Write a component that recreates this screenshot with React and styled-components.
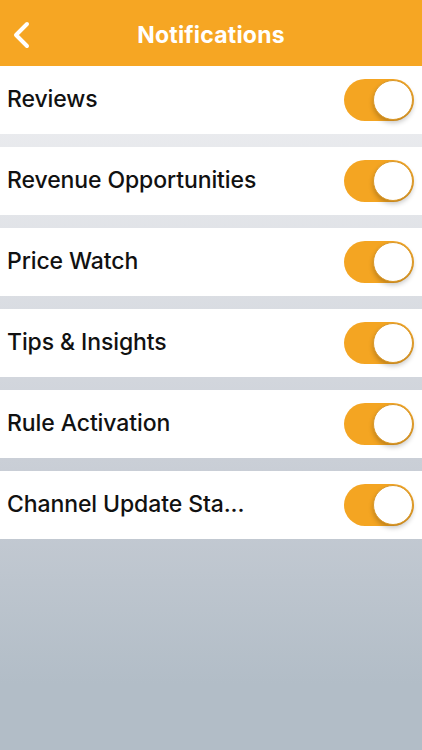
import React, { useState } from 'react';
import styled, { createGlobalStyle } from 'styled-components';

const GlobalStyle = createGlobalStyle`
    html, body {
        margin: 0;
        padding: 0;
    }
    body {
        font-family: Inter, "Liberation Sans", Arial, sans-serif;
        -webkit-font-smoothing: antialiased;
    }
`;

const Screen = styled.div`
    width: 422px;
    min-height: 750px;
    display: flex;
    flex-direction: column;
    background: linear-gradient(180deg, #f3f3f5 0px, #e4e6ea 200px, #c9ced6 470px, #b2bdc7 684px);
`;

const Header = styled.header`
    height: 66px;
    flex-shrink: 0;
    background: #f6a623;
    display: grid;
    grid-template-columns: 60px 1fr 60px;
    align-items: center;
`;

const BackButton = styled.button`
    background: none;
    border: none;
    padding: 4px 0 0 12px;
    height: 66px;
    display: flex;
    align-items: center;
    cursor: pointer;
`;

const Title = styled.h1`
    margin: 0;
    text-align: center;
    color: #fff;
    font-size: 23px;
    font-weight: 700;
    letter-spacing: 0.2px;
    padding-top: 3px;
`;

const List = styled.ul`
    list-style: none;
    margin: 0;
    padding: 0;
    display: flex;
    flex-direction: column;
    gap: 13px;
`;

const Row = styled.li`
    height: 68px;
    background: #fff;
    display: flex;
    align-items: center;
    justify-content: space-between;
    padding: 0 8px 0 7px;
`;

const Label = styled.span`
    font-size: 23px;
    font-weight: 500;
    color: #111;
    letter-spacing: -0.1px;
    white-space: nowrap;
    overflow: hidden;
    text-overflow: ellipsis;
    max-width: 260px;
    padding-bottom: 3px;
`;

const Track = styled.button`
    width: 70px;
    height: 42px;
    border-radius: 21px;
    border: none;
    padding: 0;
    background: ${p => (p.$on ? '#f4a522' : '#e5e5ea')};
    display: flex;
    align-items: center;
    justify-content: ${p => (p.$on ? 'flex-end' : 'flex-start')};
    cursor: pointer;
`;

const Knob = styled.span`
    width: 40px;
    height: 40px;
    box-sizing: border-box;
    border-radius: 50%;
    background: #fff;
    border: 1.5px solid #d9982a;
    box-shadow: 0 3px 5px rgba(0, 0, 0, 0.22);
    margin: 0 1px;
`;

const Toggle = ({ on, onClick }) => (
    <Track $on={on} onClick={onClick}>
        <Knob />
    </Track>
);

const items = [
    'Reviews',
    'Revenue Opportunities',
    'Price Watch',
    'Tips & Insights',
    'Rule Activation',
    'Channel Update Status',
];

const App = () => {
    const [ settings, setSettings ] = useState(items.map(() => true));

    const flip = i => {
        setSettings(settings.map((v, j) => (j === i ? !v : v)));
    };

    return (
        <>
            <GlobalStyle />
            <Screen>
                <Header>
                    <BackButton aria-label="Back">
                        <svg width="22" height="28" viewBox="0 0 22 28">
                            <path d="M15 3 L4 14 L15 25" fill="none" stroke="#fff" strokeWidth="4" strokeLinecap="round" strokeLinejoin="round" />
                        </svg>
                    </BackButton>
                    <Title>Notifications</Title>
                    <div />
                </Header>
                <List>
                    {items.map((name, i) => (
                        <Row key={name}>
                            <Label>{name === 'Channel Update Status' ? 'Channel Update Sta...' : name}</Label>
                            <Toggle on={settings[i]} onClick={() => flip(i)} />
                        </Row>
                    ))}
                </List>
            </Screen>
        </>
    );
};

export default App;
